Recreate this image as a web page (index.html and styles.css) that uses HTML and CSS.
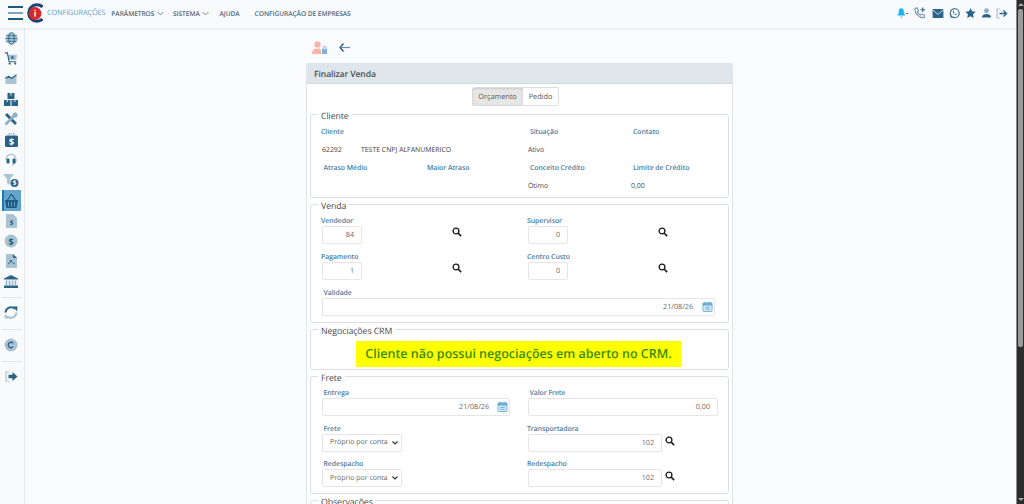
FILE: index.html
```html
<!DOCTYPE html>
<html lang="pt-BR">
<head>
    <meta charset="UTF-8">
    <title>Finalizar Venda</title>
    <link rel="stylesheet" href="styles.css">
</head>
<body>
<svg class="defs" width="0" height="0">
    <symbol id="search" viewBox="0 0 12 12">
        <circle cx="4.8" cy="4.8" r="3.5" fill="none" stroke="#1c1c1c" stroke-width="1.6"/>
        <path d="M7.5 7.5L11 11" stroke="#1c1c1c" stroke-width="2"/>
    </symbol>
    <symbol id="calendar" viewBox="0 0 12 12">
        <rect x="1" y="2" width="10" height="9.5" rx="1" fill="#d8eaf6" stroke="#6aaed8"/>
        <rect x="1" y="2" width="10" height="3" fill="#6aaed8"/>
        <path d="M3.5 .8V3M8.500 .8V3" stroke="#6aaed8"/>
        <path d="M3.500 7H8.500M3.500 9H8.500" stroke="#6aaed8"/>
    </symbol>
</svg>
<div class="app">
    <div class="page">
        <header class="topbar">
            <div class="menu-btn"><span></span><span class="light"></span><span></span></div>
            <svg class="logo" width="19" height="20" viewBox="0 0 19 20">
                <path d="M17.500 3.800A8.300 8.300 0 1 0 17.500 16.200" fill="none" stroke="#1d3f78" stroke-width="3"/>
                <circle cx="10" cy="10.500" r="6.500" fill="#d42a2a"/>
                <rect x="9.300" y="9" width="1.500" height="4.500" fill="#fff"/>
                <rect x="9.300" y="6.800" width="1.500" height="1.400" fill="#fff"/>
            </svg>
            <span class="brand">CONFIGURAÇÕES</span>
            <nav class="nav">
                <a class="nav-link">PARÂMETROS <svg width="7" height="5" viewBox="0 0 7 5"><path d="M.5 1L3.500 4L6.500 1" fill="none" stroke="#6d8899"/></svg></a>
                <a class="nav-link">SISTEMA <svg width="7" height="5" viewBox="0 0 7 5"><path d="M.5 1L3.500 4L6.500 1" fill="none" stroke="#6d8899"/></svg></a>
                <a class="nav-link">AJUDA</a>
                <a class="nav-link">CONFIGURAÇÃO DE EMPRESAS</a>
            </nav>
            <div class="top-icons">
                <svg width="12" height="12" viewBox="0 0 14 12"><path d="M5 0.500C7.500 0.500 8 3 8 5C8 7 9.500 8 9.500 9H.5C.5 8 2 7 2 5C2 3 2.500 .5 5 .5Z" fill="#19b5ee"/><path d="M3.500 10H6.500L5 11.500Z" fill="#19b5ee"/><path d="M10.500 6H13.500L12 7.500Z" fill="#333"/></svg>
                <svg width="12" height="12" viewBox="0 0 13 13"><path d="M1 1.500L3.500 1L5 4L3.500 5.200C4 6.800 5.500 8.300 7.200 8.800L8.500 7.500L11.500 9L11 11.500C5.500 12 .5 7 1 1.500Z" fill="none" stroke="#7d9db3" stroke-width="1.300"/><path d="M9.500 .5V5.500M7 3H12" stroke="#2c6a90" stroke-width="1.300"/></svg>
                <svg width="12" height="9" viewBox="0 0 12 10"><rect y="0" width="12" height="10" rx="1" fill="#2a6388"/><path d="M0 1L6 6L12 1" fill="none" stroke="#a9c3d3" stroke-width="1.200"/></svg>
                <svg width="11" height="11" viewBox="0 0 11 11"><circle cx="5.700" cy="5.300" r="4.500" fill="none" stroke="#2a6388" stroke-width="1.100"/><path d="M1.200 10L2 7.500L3.500 9Z" fill="#2a6388"/><path d="M3.800 3.300C3.800 5.500 5.500 7.200 7.700 7.200L7.500 6L6.500 5.800L6 6.300C5.500 6 5 5.500 4.800 5L5.300 4.500L5 3.300Z" fill="#2a6388"/></svg>
                <svg width="11" height="10" viewBox="0 0 12 11"><path d="M6 0L7.700 3.700L11.700 4.200L8.800 6.900L9.600 11L6 9L2.400 11L3.200 6.900L.3 4.200L4.300 3.700Z" fill="#2a6388"/></svg>
                <svg width="9" height="10" viewBox="0 0 10 11"><circle cx="5" cy="3" r="2.700" fill="#8fb0c4"/><path d="M0 10.500C0 7.500 2 6.500 5 6.500C8 6.500 10 7.500 10 10.500Z" fill="#2a6388"/></svg>
                <svg width="12" height="11" viewBox="0 0 12 11"><path d="M4 1H1V10H4" fill="none" stroke="#a9c3d3" stroke-width="1.200"/><path d="M3.500 5.500H10M7.500 2.500L10.500 5.500L7.500 8.500" fill="none" stroke="#2a6388" stroke-width="1.400"/></svg>
            </div>
        </header>
        <div class="workspace">
            <aside class="sidebar">
                <div class="side-item"><svg width="13" height="13" viewBox="0 0 14 14"><circle cx="7" cy="7" r="6.500" fill="#a9c3d3"/><ellipse cx="7" cy="7" rx="3" ry="6.500" fill="none" stroke="#2b6385"/><path d="M.5 7H13.500M1.500 4H12.500M1.500 10H12.500" stroke="#2b6385" stroke-width=".8"/></svg></div>
                <div class="side-item"><svg width="13" height="13" viewBox="0 0 14 14"><path d="M3 3H13L12 8.500H4Z" fill="#a9c3d3"/><path d="M0 1H2.500L4.500 10.500H12" fill="none" stroke="#2a6388" stroke-width="1.200"/><circle cx="5" cy="12.500" r="1.200" fill="#2a6388"/><circle cx="11" cy="12.500" r="1.200" fill="#2a6388"/><path d="M8 3.500L8.700 5L10.200 5.200L9 6.200L9.300 7.700L8 7L6.700 7.700L7 6.200L5.800 5.200L7.300 5Z" fill="#2a6388"/></svg></div>
                <div class="side-item"><svg width="14" height="11" viewBox="0 0 14 12"><path d="M1 3L4.500 6L8 4L13 1V12H1Z" fill="#a9c3d3"/><path d="M1 6L4.500 3.500L7.500 6L13 2" fill="none" stroke="#2a6388" stroke-width="1.200"/></svg></div>
                <div class="side-item"><svg width="14" height="13" viewBox="0 0 14 13"><rect x="3.500" y="0" width="7" height="6" fill="#2a6388"/><rect y="7" width="6.500" height="6" fill="#2a6388"/><rect x="7.500" y="7" width="6.500" height="6" fill="#2a6388"/><path d="M6.200 0V2.500H7.800V0M2.500 7V9H4V7M10 7V9H11.500V7" fill="#a9c3d3"/></svg></div>
                <div class="side-item"><svg width="14" height="14" viewBox="0 0 14 14"><path d="M3 1L13 11L11 13L1 3Z" fill="#2a6388"/><path d="M12.500 1.500L1.500 12.500" stroke="#8fb0c4" stroke-width="2.600"/><circle cx="11" cy="3" r="2.500" fill="#8fb0c4"/></svg></div>
                <div class="side-item"><svg width="13" height="14" viewBox="0 0 13 14"><rect y="2.500" width="13" height="11.500" rx="1.500" fill="#2a6388"/><path d="M3.500 2.500L5 0H8L9.500 2.500" fill="none" stroke="#8fb0c4" stroke-width="1.200"/><text class="dollar" x="6.500" y="11.500">$</text></svg></div>
                <div class="side-item"><svg width="14" height="13" viewBox="0 0 14 13"><path d="M2 7C2 -.5 12 -.5 12 7C12 10 11 11 8 12" fill="none" stroke="#a9c3d3" stroke-width="1.400"/><rect x="2.500" y="5.500" width="3" height="5" rx="1.200" fill="#2a6388"/><rect x="8.500" y="5.500" width="3" height="5" rx="1.200" fill="#2a6388"/></svg></div>
                <div class="side-item"><svg width="16" height="13" viewBox="0 0 16 13"><path d="M0 0H11L7 5V11L4 9V5Z" fill="#a9c3d3"/><circle cx="11.500" cy="9" r="4" fill="#2a6388"/><text class="dollar small" x="11.500" y="11">$</text></svg></div>
                <div class="side-item active"><svg width="15" height="14" viewBox="0 0 15 14"><path d="M3.500 6L7.500 0L11.500 6" fill="none" stroke="#1f5a80" stroke-width="1.200"/><path d="M1 6H14L12.500 14H2.500Z" fill="#1f5a80"/><path d="M4.500 8V12.500M7.500 8V12.500M10.500 8V12.500" stroke="#63a3cc"/></svg></div>
                <div class="side-item"><svg width="11" height="14" viewBox="0 0 11 14"><path d="M0 0H7L11 4V14H0Z" fill="#a9c3d3"/><text class="dollar dark small" x="5.500" y="11">$</text></svg></div>
                <div class="side-item"><svg width="14" height="14" viewBox="0 0 14 14"><circle cx="7" cy="7" r="6.500" fill="#a9c3d3"/><text class="dollar dark" x="7" y="10.500">$</text></svg></div>
                <div class="side-item"><svg width="11" height="14" viewBox="0 0 11 14"><path d="M0 0H7L11 4V14H0Z" fill="#a9c3d3"/><path d="M7 0V4H11Z" fill="#2a6388"/><path d="M2 10C4 9 5 7 5 6C5.500 8 7 9.500 9 10" fill="none" stroke="#2a6388"/></svg></div>
                <div class="side-item"><svg width="14" height="13" viewBox="0 0 14 13"><path d="M7 0L14 3.500V4.500H0V3.500Z" fill="#2a6388"/><path d="M2.500 5.500V10M5.500 5.500V10M8.500 5.500V10M11.500 5.500V10" stroke="#8fb0c4" stroke-width="1.500"/><rect y="10.500" width="14" height="2.500" fill="#2a6388"/></svg></div>
                <hr class="side-sep first">
                <div class="side-item"><svg width="14" height="13" viewBox="0 0 14 13"><path d="M1.500 6.500C2 2 7 -.5 11 2.500" fill="none" stroke="#2a6388" stroke-width="2"/><path d="M9 .5L13.500 .5L13 5.500Z" fill="#2a6388"/><path d="M12.500 6.500C12 11 7 13.500 3 10.500" fill="none" stroke="#a9c3d3" stroke-width="2"/><path d="M5 12.500L.5 12.500L1 7.500Z" fill="#a9c3d3"/></svg></div>
                <hr class="side-sep second">
                <div class="side-item"><svg width="14" height="14" viewBox="0 0 14 14"><circle cx="7" cy="7" r="6.500" fill="#a9c3d3"/><path d="M9 5.200A2.700 2.700 0 1 0 9 8.800" fill="none" stroke="#2a6388" stroke-width="1.400"/></svg></div>
                <hr class="side-sep third">
                <div class="side-item"><svg width="13" height="11" viewBox="0 0 13 11"><path d="M4 1H1V10H4" fill="none" stroke="#a9c3d3" stroke-width="1.200"/><path d="M3.500 3.800H7.500V1L12.500 5.500L7.500 10V7.200H3.500Z" fill="#2a6388"/></svg></div>
            </aside>
            <main class="content">
                <div class="toolbar">
                    <svg width="15" height="13" viewBox="0 0 15 13"><circle cx="5.500" cy="3.500" r="3.200" fill="#f7b5aa"/><path d="M0 13C0 8.500 2.500 7.500 5.500 7.500C7 7.500 8.500 8 9 9V13Z" fill="#f7b5aa"/><rect x="10" y="8" width="5" height="5" rx=".6" fill="#7fb2d6"/><path d="M11 8V6.500C11 5 14 5 14 6.500V8" fill="none" stroke="#7fb2d6"/></svg>
                    <svg class="back" width="11" height="9" viewBox="0 0 11 9"><path d="M4.500 .5L1 4.500L4.500 8.500" fill="none" stroke="#1f5a80" stroke-width="1.300"/><path d="M1.500 4.500H11" stroke="#5d92b5" stroke-width="1.200"/></svg>
                </div>
                <section class="panel">
                    <h1 class="panel-title">Finalizar Venda</h1>
                    <div class="tabs">
                        <button class="tab selected">Orçamento</button><button class="tab">Pedido</button>
                    </div>

                    <fieldset class="group cliente">
                        <legend>Cliente</legend>
                        <div class="info-grid">
                            <label class="span-2">Cliente</label><label>Situação</label><label>Contato</label>
                            <span class="span-2 value"><span class="code">62292</span>TESTE CNPJ ALFANUMERICO</span><span class="value">Ativo</span><span></span>
                            <label class="shift">Atraso Médio</label><label>Maior Atraso</label><label>Conceito Crédito</label><label>Limite de Crédito</label>
                            <span></span><span></span><span class="value">Ótimo</span><span class="value">0,00</span>
                        </div>
                    </fieldset>

                    <fieldset class="group venda">
                        <legend>Venda</legend>
                        <div class="two-col">
                            <div class="lookup">
                                <div><label>Vendedor</label><input class="input short" value="84"></div>
                                <svg class="search"><use href="#search"/></svg>
                            </div>
                            <div class="lookup">
                                <div><label>Supervisor</label><input class="input short" value="0"></div>
                                <svg class="search"><use href="#search"/></svg>
                            </div>
                            <div class="lookup">
                                <div><label>Pagamento</label><input class="input short" value="1"></div>
                                <svg class="search"><use href="#search"/></svg>
                            </div>
                            <div class="lookup">
                                <div><label>Centro Custo</label><input class="input short" value="0"></div>
                                <svg class="search"><use href="#search"/></svg>
                            </div>
                        </div>
                        <div class="wide">
                            <label class="shift">Validade</label>
                            <div class="date-box"><input class="input date" value="21/08/26"><svg class="cal"><use href="#calendar"/></svg></div>
                        </div>
                    </fieldset>

                    <fieldset class="group crm">
                        <legend>Negociações CRM</legend>
                        <p class="warning">Cliente não possui negociações em aberto no CRM.</p>
                    </fieldset>

                    <fieldset class="group frete">
                        <legend>Frete</legend>
                        <div class="frete-grid">
                            <div>
                                <label class="shift">Entrega</label>
                                <div class="date-box"><input class="input date" value="21/08/26"><svg class="cal"><use href="#calendar"/></svg></div>
                            </div>
                            <div>
                                <label class="shift">Valor Frete</label>
                                <input class="input full" value="0,00">
                            </div>
                            <div>
                                <label class="shift">Frete</label>
                                <select class="input pick"><option>Próprio por conta</option></select>
                            </div>
                            <div>
                                <label>Transportadora</label>
                                <div class="carrier"><input class="input carrier-code" value="102"><svg class="search"><use href="#search"/></svg></div>
                            </div>
                            <div>
                                <label class="shift">Redespacho</label>
                                <select class="input pick"><option>Próprio por conta</option></select>
                            </div>
                            <div>
                                <label>Redespacho</label>
                                <div class="carrier"><input class="input carrier-code" value="102"><svg class="search"><use href="#search"/></svg></div>
                            </div>
                        </div>
                    </fieldset>

                    <fieldset class="group obs">
                        <legend>Observações</legend>
                    </fieldset>
                </section>
            </main>
        </div>
    </div>
    <div class="scrollbar">
        <span class="arrow up"></span>
        <span class="thumb"></span>
        <span class="arrow down"></span>
    </div>
</div>
</body>
</html>
```

FILE: styles.css
```css
*{
    margin: 0;
    padding: 0;
    box-sizing: border-box;
}
html, body{
    height: 100%;
    overflow: hidden;
}
body{
    font-family: "Open Sans", "Noto Sans", sans-serif;
    text-rendering: geometricPrecision;
    color: #444;
    background-color: #fafbfc;
}
.defs{
    position: absolute;
}
.app{
    display: flex;
    height: 504px;
}
.page{
    flex: 1;
    display: flex;
    flex-direction: column;
    min-width: 0;
}

/* top bar */
.topbar{
    height: 28px;
    flex: none;
    display: flex;
    align-items: center;
    padding: 0 8px;
    background-color: #f9fafc;
    box-shadow: 0 1px 3px rgba(0,0,0,.08);
    position: relative;
    z-index: 2;
}
.menu-btn{
    width: 15px;
    height: 14px;
    margin-top: -2px;
    display: flex;
    flex-direction: column;
    justify-content: space-between;
}
.menu-btn span{
    height: 2px;
    background-color: #1f5a80;
}
.menu-btn .light{
    background-color: #7ea3bb;
}
.logo{
    margin: -3px 0 0 2px;
}
.brand{
    margin: -3px 0 0 3px;
    font-size: 7.300px;
    letter-spacing: -.1px;
    color: #5b9fcb;
}
.nav{
    display: flex;
    margin-left: 6px;
    margin-top: -1px;
}
.nav-link{
    font-size: 6.600px;
    font-weight: 600;
    letter-spacing: -.05px;
    color: #4f6b7c;
    white-space: nowrap;
}
.nav-link:nth-child(1){
    margin-right: 9px;
}
.nav-link:nth-child(2){
    margin-right: 10px;
}
.nav-link:nth-child(3){
    margin-right: 15px;
}
.nav-link svg{
    margin-left: 1px;
}
.top-icons{
    margin-left: auto;
    margin-top: -2px;
    width: 111px;
    display: flex;
    align-items: center;
    justify-content: space-between;
}

/* side menu */
.workspace{
    flex: 1;
    display: flex;
    min-height: 0;
}
.sidebar{
    width: 25px;
    flex: none;
    padding: 0 3px 0 2px;
    background-color: #f9fafc;
    border-right: 1px solid #e8ebee;
}
.side-item{
    height: 20.300px;
    display: flex;
    align-items: center;
    justify-content: center;
}
.side-item svg{
    margin-left: -1px;
}
.side-item.active{
    background-color: #63a3cc;
    border-left: 2px solid #1a7cb8;
    padding-right: 2px;
}
.side-sep{
    border: 0;
    border-top: 1px solid #e4e7ea;
}
.side-sep.first{
    margin: 5px 0 4px;
}
.side-sep.second{
    margin: 7px 0 5px;
}
.side-sep.third{
    margin: 6px 0 4px;
}
.dollar{
    font-size: 9px;
    font-weight: 700;
    fill: #fff;
    text-anchor: middle;
}
.dollar.dark{
    fill: #1f5a80;
}
.dollar.small{
    font-size: 6.500px;
}

/* content */
.content{
    flex: 1;
    display: flex;
    flex-direction: column;
    padding-left: 281px;
    min-width: 0;
}
.toolbar{
    height: 35px;
    flex: none;
    display: flex;
    align-items: center;
    padding: 4px 0 0 6px;
}
.back{
    margin-left: 12px;
}
.panel{
    width: 427px;
    flex: 1;
    overflow: hidden;
    background-color: #fff;
    border: 1px solid #e2e5e8;
    border-bottom: 0;
    border-radius: 2px 2px 0 0;
    padding: 0 3px;
}
.panel-title{
    height: 20px;
    margin: 0 -3px;
    padding-left: 7px;
    font-size: 8.600px;
    letter-spacing: -.1px;
    line-height: 20px;
    font-weight: 600;
    color: #4a4f54;
    background-color: #dee5eb;
    border-bottom: 1px solid #cfd9e2;
}
.tabs{
    display: flex;
    justify-content: center;
    height: 19px;
    margin-top: 3px;
    padding-right: 8px;
}
.tab{
    width: 36px;
    height: 19px;
    font-family: inherit;
    text-rendering: geometricPrecision;
    font-size: 7.300px;
    color: #555;
    background-color: #fff;
    border: 1px solid #dcdcdc;
}
.tab:first-child{
    border-radius: 2px 0 0 2px;
}
.tab:last-child{
    border-radius: 0 2px 2px 0;
    border-left: 0;
}
.tab.selected{
    width: 51px;
    background-color: #e6e6e6;
    box-shadow: inset 0 1px 2px rgba(0,0,0,.12);
}

/* field groups, the legend box sits half above the drawn border */
.group{
    border: 1px solid #dcdfe2;
    border-radius: 3px;
    padding: 0 10px;
    margin-bottom: -2px;
    min-width: 0;
}
.group legend{
    font-size: 8.800px;
    letter-spacing: -.1px;
    line-height: 12px;
    padding: 4px 3px 0 3px;
    margin-left: -3px;
    margin-bottom: -2px;
    color: #4a4a4a;
}
label{
    display: block;
    height: 11px;
    font-size: 6.900px;
    font-weight: 600;
    letter-spacing: -.05px;
    color: #4a7d9f;
    line-height: 13px;
}
.shift{
    margin-left: 2.500px;
}
.cliente{
    height: 92px;
}
.info-grid{
    display: grid;
    grid-template-columns: 106px 103px 103px 1fr;
    grid-auto-rows: 18px;
    align-items: center;
    margin-top: 3px;
}
.info-grid label{
    height: auto;
    line-height: 11px;
}
.span-2{
    grid-column: span 2;
}
.value{
    font-size: 6.900px;
    color: #444;
    margin-left: -2px;
}
.span-2.value{
    margin-left: 1px;
}
.code{
    display: inline-block;
    width: 39px;
}
.input{
    display: block;
    height: 18px;
    margin-left: 1px;
    font-family: inherit;
    text-rendering: geometricPrecision;
    font-size: 7.200px;
    color: #666;
    text-align: right;
    padding: 0 7px;
    background-color: #fff;
    border: 1px solid #e6e6e6;
    border-radius: 2px;
    outline: none;
}
.short{
    width: 40px;
}
.venda{
    height: 127px;
}
.two-col{
    display: grid;
    grid-template-columns: 206px 1fr;
    grid-auto-rows: 36px;
    margin-top: 5px;
}
.lookup{
    display: flex;
    width: 141px;
    justify-content: space-between;
}
.search{
    width: 10px;
    height: 10px;
    margin-top: 12px;
    flex: none;
}
.date-box{
    position: relative;
    margin-left: 1px;
}
.date{
    width: 100%;
    margin-left: 0;
    padding-right: 21px;
}
.cal{
    position: absolute;
    right: 2px;
    top: 3px;
    width: 11px;
    height: 11px;
}
.wide .date-box{
    width: 393px;
}
.crm{
    height: 49px;
}
.warning{
    width: 325px;
    height: 26px;
    margin: 6px 0 0 35px;
    text-align: center;
    font-size: 12.500px;
    line-height: 26px;
    font-weight: 600;
    color: #3c8c00;
    background-color: #ffff00;
    white-space: nowrap;
}
.frete{
    height: 126px;
}
.frete-grid{
    display: grid;
    grid-template-columns: 206px 191px;
    grid-auto-rows: 35.500px;
    margin-top: 5px;
}
.frete-grid .date-box{
    width: 188px;
}
.frete-grid .date{
    padding-right: 20px;
}
.full{
    width: 190px;
}
.pick{
    width: 80px;
    text-align: left;
    color: #666;
    font-size: 7px;
    padding: 0 10px 0 7px;
    appearance: none;
    background: #fff url("data:image/svg+xml,%3Csvg xmlns='http://www.w3.org/2000/svg' width='6' height='4'%3E%3Cpath d='M.5.5L3 3L5.500.5' fill='none' stroke='%23333' stroke-width='1.200'/%3E%3C/svg%3E") no-repeat right 3px center;
}
.carrier-code{
    width: 134px;
}
.carrier{
    display: flex;
    gap: 3px;
}
.carrier .search{
    margin-top: 2px;
}
.obs{
    height: 40px;
}

/* scrollbar, as the browser drew it */
.scrollbar{
    width: 8px;
    flex: none;
    display: flex;
    flex-direction: column;
    align-items: center;
    background-color: #2c2c2c;
    border-left: 1px solid #8c8c8c;
    padding: 3px 0;
}
.thumb{
    width: 5px;
    height: 338px;
    margin-top: 3px;
    background-color: #9b9b9b;
    border-radius: 2px;
}
.arrow{
    width: 0;
    height: 0;
    border-left: 3px solid transparent;
    border-right: 3px solid transparent;
}
.arrow.up{
    border-bottom: 3px solid #a8a8a8;
}
.arrow.down{
    margin-top: auto;
    border-top: 3px solid #a8a8a8;
}
```
